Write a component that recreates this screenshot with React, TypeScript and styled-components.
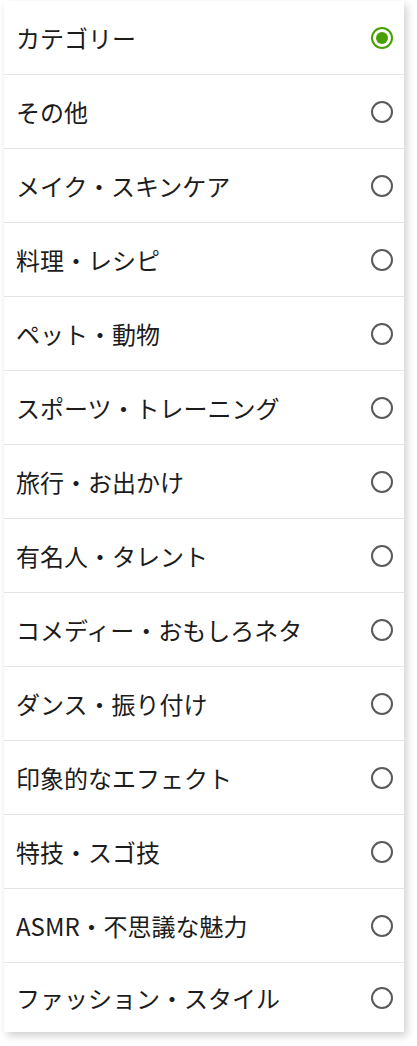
import React, { FC } from "react";
import styled, { createGlobalStyle } from "styled-components";

const GlobalStyle = createGlobalStyle`
  html, body {
    margin: 0;
    padding: 0;
    background: #ffffff;
  }
  body {
    font-family: "Noto Sans CJK JP", "Noto Sans", sans-serif;
  }
`;

const Page = styled.div`
  width: 417px;
  height: 1046px;
  overflow: hidden;
  padding: 1px 0 0 4px;
  box-sizing: border-box;
`;

const Card = styled.ul`
  list-style: none;
  margin: 0;
  padding: 0;
  width: 400px;
  background: #ffffff;
  box-shadow: 3px 4px 8px rgba(0, 0, 0, 0.18);
`;

const Row = styled.li`
  display: flex;
  align-items: center;
  justify-content: space-between;
  height: 73px;
  padding: 0 11px 0 12px;
  border-bottom: 1px solid #e4e4e4;
  box-sizing: content-box;

  &:last-child {
    border-bottom: none;
    height: 69px;
  }
`;

const Label = styled.span`
  font-size: 24px;
  line-height: 1;
  color: #1c1c1c;
  letter-spacing: 0;
`;

const Radio = styled.span<{ $checked: boolean }>`
  position: relative;
  width: 22px;
  height: 22px;
  box-sizing: border-box;
  border-radius: 50%;
  border: 2px solid ${(p) => (p.$checked ? "#48a000" : "#5a5a5a")};

  &::after {
    content: "";
    display: ${(p) => (p.$checked ? "block" : "none")};
    position: absolute;
    left: 3px;
    top: 3px;
    width: 12px;
    height: 12px;
    border-radius: 50%;
    background: #48a000;
  }
`;

const items = [
  "カテゴリー",
  "その他",
  "メイク・スキンケア",
  "料理・レシピ",
  "ペット・動物",
  "スポーツ・トレーニング",
  "旅行・お出かけ",
  "有名人・タレント",
  "コメディー・おもしろネタ",
  "ダンス・振り付け",
  "印象的なエフェクト",
  "特技・スゴ技",
  "ASMR・不思議な魅力",
  "ファッション・スタイル",
];

const App: FC = () => {
  return (
    <>
      <GlobalStyle />
      <Page>
        <Card>
          {items.map((label, i) => (
            <Row key={label}>
              <Label>{label}</Label>
              <Radio $checked={i === 0} />
            </Row>
          ))}
        </Card>
      </Page>
    </>
  );
};

export default App;
